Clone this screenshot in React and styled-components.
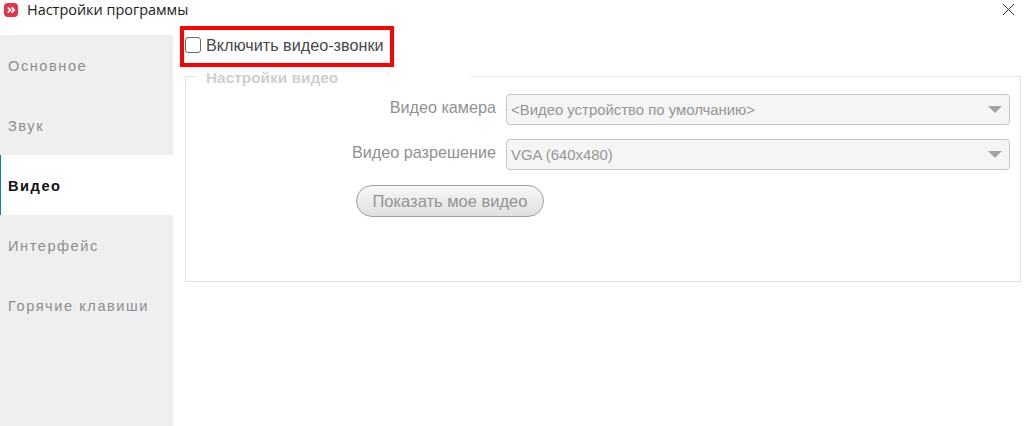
import React from "react";
import styled, { createGlobalStyle } from "styled-components";

const Global = createGlobalStyle`
  html, body {
    margin: 0;
    padding: 0;
    background: #fff;
    overflow: hidden;
  }
`;

const menuItems = ["Основное", "Звук", "Видео", "Интерфейс", "Горячие клавиши"];

const App = () => {
  return (
    <Window>
      <Global />
      <TitleBar>
        <AppIcon viewBox="0 0 14 14">
          <rect x="0" y="0" width="14" height="14" rx="4" fill="#e8324a" />
          <path d="M3.2 4.3 L5.7 7 L3.2 9.7 M7 4.3 L9.5 7 L7 9.7" transform="translate(0.7 0)" fill="none" stroke="#fff" strokeWidth="1.9" />
        </AppIcon>
        <Title>Настройки программы</Title>
        <CloseIcon viewBox="0 0 14 14">
          <path d="M1 1 L13 13 M13 1 L1 13" stroke="#222" strokeWidth="1" fill="none" />
        </CloseIcon>
      </TitleBar>
      <Body>
        <Sidebar>
          {menuItems.map((item) => (
            <MenuItem key={item} $active={item === "Видео"}>
              {item}
            </MenuItem>
          ))}
        </Sidebar>
        <Content>
          <Highlight>
            <CheckBox />
            <CheckLabel>Включить видео-звонки</CheckLabel>
          </Highlight>
          <Group>
            <GroupTitle>Настройки видео</GroupTitle>
            <FormRow>
              <FieldLabel>Видео камера</FieldLabel>
              <Select>
                <span>&lt;Видео устройство по умолчанию&gt;</span>
                <Arrow />
              </Select>
            </FormRow>
            <FormRow>
              <FieldLabel>Видео разрешение</FieldLabel>
              <Select>
                <span>VGA (640x480)</span>
                <Arrow />
              </Select>
            </FormRow>
            <ShowButton>Показать мое видео</ShowButton>
          </Group>
        </Content>
      </Body>
    </Window>
  );
};

const Window = styled.div`
  width: 1024px;
  height: 426px;
  display: flex;
  flex-direction: column;
  background: #fff;
  font-family: "Liberation Sans", Arial, sans-serif;
`;
const TitleBar = styled.div`
  height: 35px;
  flex: none;
  display: flex;
  align-items: flex-start;
  padding: 3px 9px 0 4px;
  box-sizing: border-box;
`;
const AppIcon = styled.svg`
  width: 14px;
  height: 14px;
`;
const Title = styled.div`
  margin-left: 9px;
  font-family: "Open Sans", "Noto Sans", sans-serif;
  font-size: 14.45px;
  line-height: 14px;
  color: #1a1a1a;
`;
const CloseIcon = styled.svg`
  width: 13px;
  height: 13px;
  margin-left: auto;
`;
const Body = styled.div`
  flex: 1;
  display: flex;
`;
const Sidebar = styled.div`
  width: 173px;
  flex: none;
  background: #efefef;
`;
const MenuItem = styled.div`
  height: 60px;
  box-sizing: border-box;
  display: flex;
  align-items: center;
  padding-left: ${(p) => (p.$active ? "7px" : "8px")};
  padding-top: 2px;
  font-size: 14.6px;
  letter-spacing: 1.55px;
  color: ${(p) => (p.$active ? "#111" : "#8e8e8e")};
  font-weight: ${(p) => (p.$active ? "bold" : "normal")};
  background: ${(p) => (p.$active ? "#fff" : "transparent")};
  border-left: ${(p) => (p.$active ? "1px solid #0f78e6" : "none")};
`;
const Content = styled.div`
  flex: 1;
  padding-left: 7px;
  display: flex;
  flex-direction: column;
  align-items: flex-start;
`;
const Highlight = styled.div`
  width: 214px;
  height: 41px;
  margin-top: -9px;
  box-sizing: border-box;
  border: 4px solid #f00;
  display: flex;
  align-items: center;
  padding: 0 0 3px 1px;
`;
const CheckBox = styled.div`
  width: 16px;
  height: 16px;
  flex: none;
  box-sizing: border-box;
  border: 1px solid #6a6a6a;
  border-radius: 3px;
  background: #fff;
`;
const CheckLabel = styled.span`
  margin-left: 5px;
  font-size: 16.2px;
  color: #484848;
  white-space: nowrap;
`;
const Group = styled.fieldset`
  width: 836px;
  height: 216px;
  margin: -1px 0 0 5px;
  padding: 0;
  box-sizing: border-box;
  border: 1px solid #e3e3e3;
`;
const GroupTitle = styled.legend`
  margin-left: 10px;
  padding: 4px 133px 0 10px;
  font-size: 15.4px;
  font-weight: bold;
  line-height: 16px;
  color: #cfcfcf;
  white-space: nowrap;
`;
const FormRow = styled.div`
  display: flex;
  align-items: center;
  margin-top: 8px;
  height: 31px;
  padding-right: 10px;
  & + & {
    margin-top: 14px;
  }
`;
const FieldLabel = styled.div`
  width: 310px;
  text-align: right;
  font-size: 16.2px;
  color: #919191;
  padding-bottom: 5px;
  white-space: nowrap;
`;
const Select = styled.div`
  margin-left: 10px;
  flex: 1;
  height: 31px;
  box-sizing: border-box;
  display: flex;
  align-items: center;
  justify-content: space-between;
  padding: 0 7px 0 4px;
  border: 1px solid #c6c6c6;
  border-radius: 4px;
  background: #f5f5f5;
  font-size: 14.9px;
  color: #979797;
`;
const Arrow = styled.div`
  width: 0;
  height: 0;
  border-left: 7px solid transparent;
  border-right: 7px solid transparent;
  border-top: 7px solid #a3a3a3;
`;
const ShowButton = styled.button`
  display: block;
  margin: 15px 0 0 170px;
  width: 188px;
  height: 32px;
  padding: 0;
  border: 1px solid #a0a0a0;
  border-radius: 16px;
  background: linear-gradient(#f8f8f8, #dfdfdf);
  font-family: "Liberation Sans", Arial, sans-serif;
  font-size: 16.5px;
  color: #939393;
`;

export default App;
